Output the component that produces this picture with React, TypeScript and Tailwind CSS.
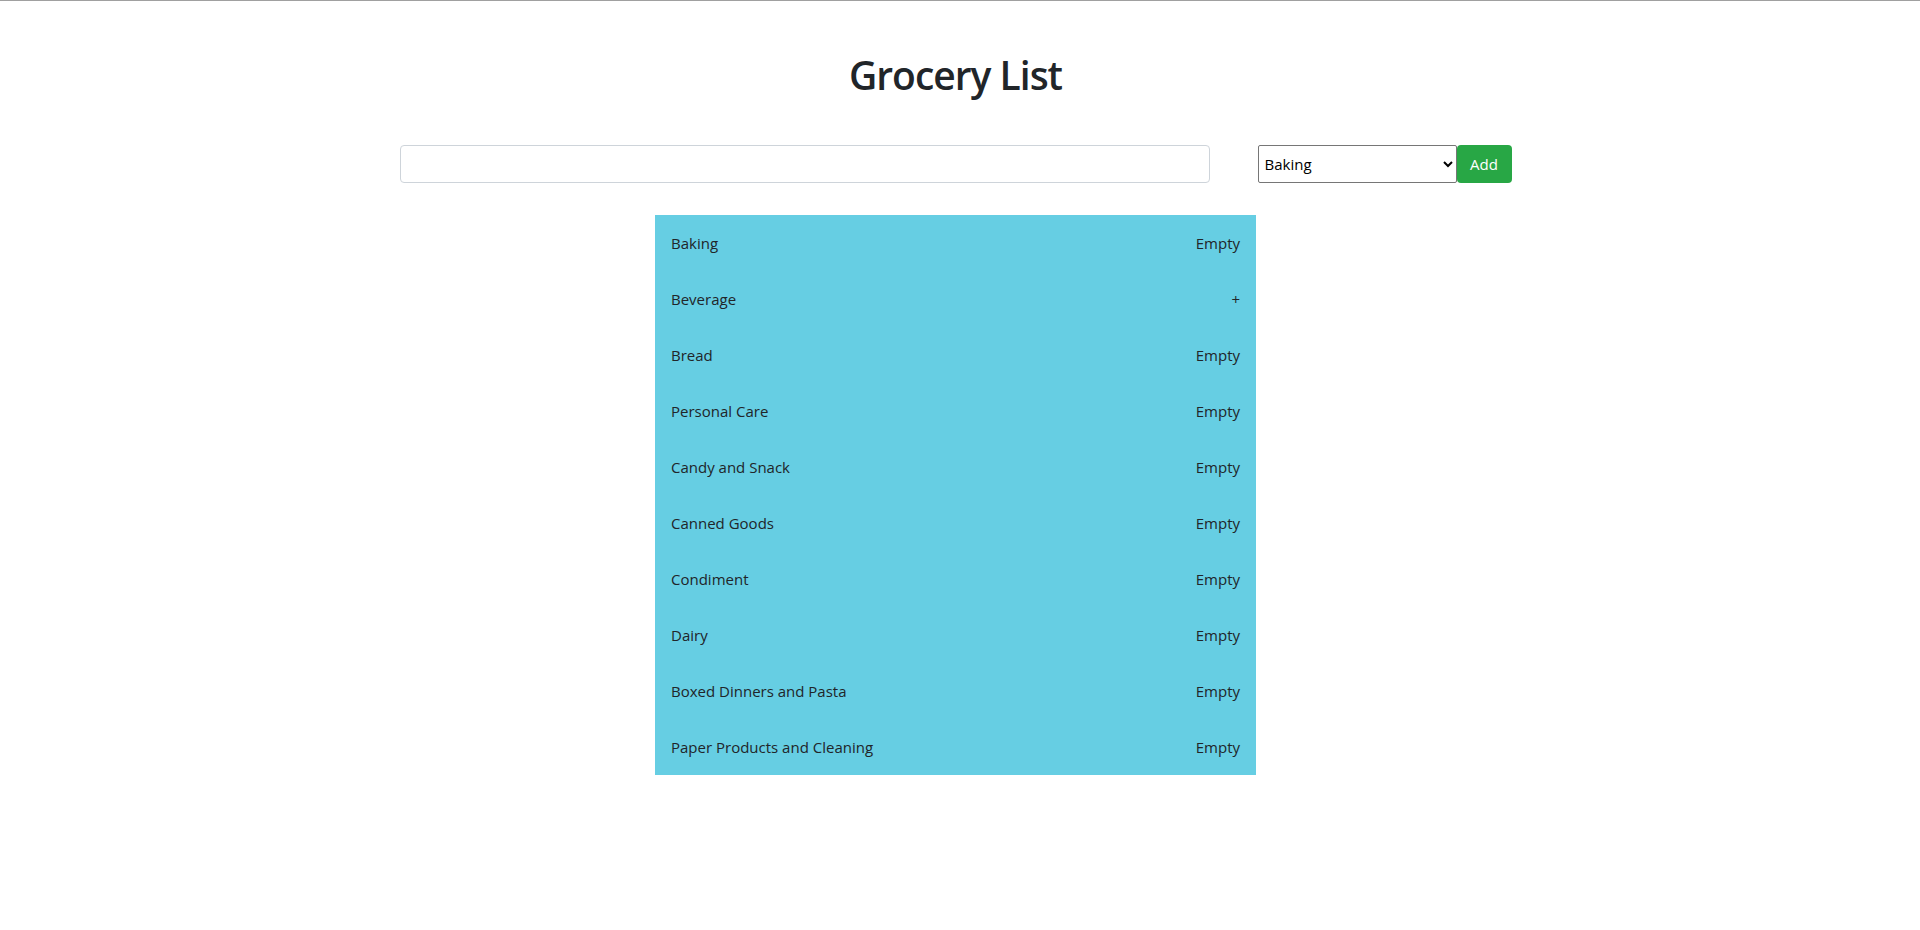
const categories = [
  { name: "Baking", status: "Empty" },
  { name: "Beverage", status: "+" },
  { name: "Bread", status: "Empty" },
  { name: "Personal Care", status: "Empty" },
  { name: "Candy and Snack", status: "Empty" },
  { name: "Canned Goods", status: "Empty" },
  { name: "Condiment", status: "Empty" },
  { name: "Dairy", status: "Empty" },
  { name: "Boxed Dinners and Pasta", status: "Empty" },
  { name: "Paper Products and Cleaning", status: "Empty" },
]

const App = () => {
  return (
    <div className="min-h-[930px] bg-white border-t border-[#a0a0a0] pr-[9px] text-[#212529] font-['Open_Sans',sans-serif]">
      <h1 className="pt-[50px] text-center text-[39px] leading-[48px] font-semibold tracking-[-1px]">Grocery List</h1>
      <div className="mx-auto mt-[46px] flex w-[1112px] items-center">
        <input
          type="text"
          className="h-[38px] flex-1 rounded-[4px] border border-[#ced4da] px-3 text-[15px] outline-none"
        />
        <select className="ml-[48px] h-[38px] w-[199px] rounded-[2px] border border-[#767676] bg-white pl-[2px] text-[15px] text-black">
          {categories.map((c) => (
            <option key={c.name}>{c.name}</option>
          ))}
        </select>
        <button className="h-[38px] w-[55px] rounded-[4px] bg-[#28a745] text-[15px] text-white">Add</button>
      </div>
      <ul className="mx-auto mt-[32px] w-[601px] bg-[#66cee3]">
        {categories.map((c) => (
          <li key={c.name} className="flex h-[56px] items-center justify-between px-4 text-[15px]">
            <span>{c.name}</span>
            <span>{c.status}</span>
          </li>
        ))}
      </ul>
    </div>
  )
}

export default App
